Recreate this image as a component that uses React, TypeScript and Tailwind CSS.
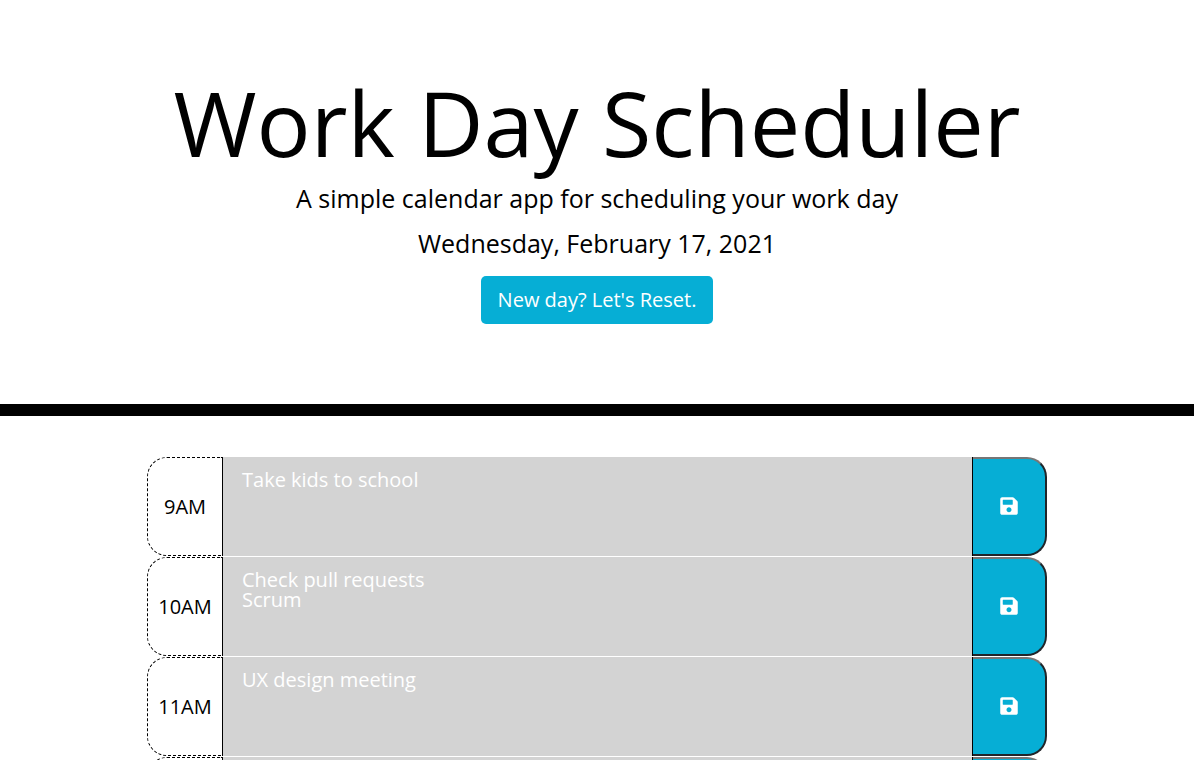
import React from "react";
import { FaSave } from "react-icons/fa";

const blocks = [
  { hour: "9AM", text: "Take kids to school" },
  { hour: "10AM", text: "Check pull requests\nScrum" },
  { hour: "11AM", text: "UX design meeting" },
  { hour: "", text: "" },
];

export default function App() {
  return (
    <div className="h-[760px] overflow-hidden bg-white font-['Open_Sans',sans-serif] text-black">
      <header className="flex h-[416px] flex-col items-center border-b-[12px] border-black pt-[70px] text-center">
        <h1 className="text-[90px] leading-[104px] font-normal whitespace-nowrap text-black">Work Day Scheduler</h1>
        <p className="mt-[5px] text-[25px] leading-[38px]">A simple calendar app for scheduling your work day</p>
        <p className="mt-[7px] text-[25px] leading-[38px]">Wednesday, February 17, 2021</p>
        <button className="mt-[14px] h-[48px] w-[232px] rounded-[5px] bg-[#06aed5] text-[20px] leading-[30px] text-white">New day? Let's Reset.</button>
      </header>
      <main className="mx-auto w-[900px] pt-[41px]">
        {blocks.map((b, i) => (
          <div key={i} className="flex h-[100px]">
            <div className="flex h-[99px] w-[75px] items-center justify-center rounded-l-[20px] border border-r-0 border-dashed border-black text-[20px]">{b.hour}</div>
            <textarea
              readOnly
              defaultValue={b.text}
              className="block h-[99px] w-[751px] resize-none overflow-hidden border-x border-black bg-[#d3d3d3] px-[19px] py-[13px] text-[20px] leading-[20px] text-white outline-none"
            />
            <button className="flex h-[99px] w-[74px] items-center justify-center rounded-r-[20px] border-2 border-l-0 border-t-[#767676] border-r-[#212529] border-b-[#212529] bg-[#06aed5] pb-px text-white">
              <FaSave size={20} />
            </button>
          </div>
        ))}
      </main>
    </div>
  );
}
